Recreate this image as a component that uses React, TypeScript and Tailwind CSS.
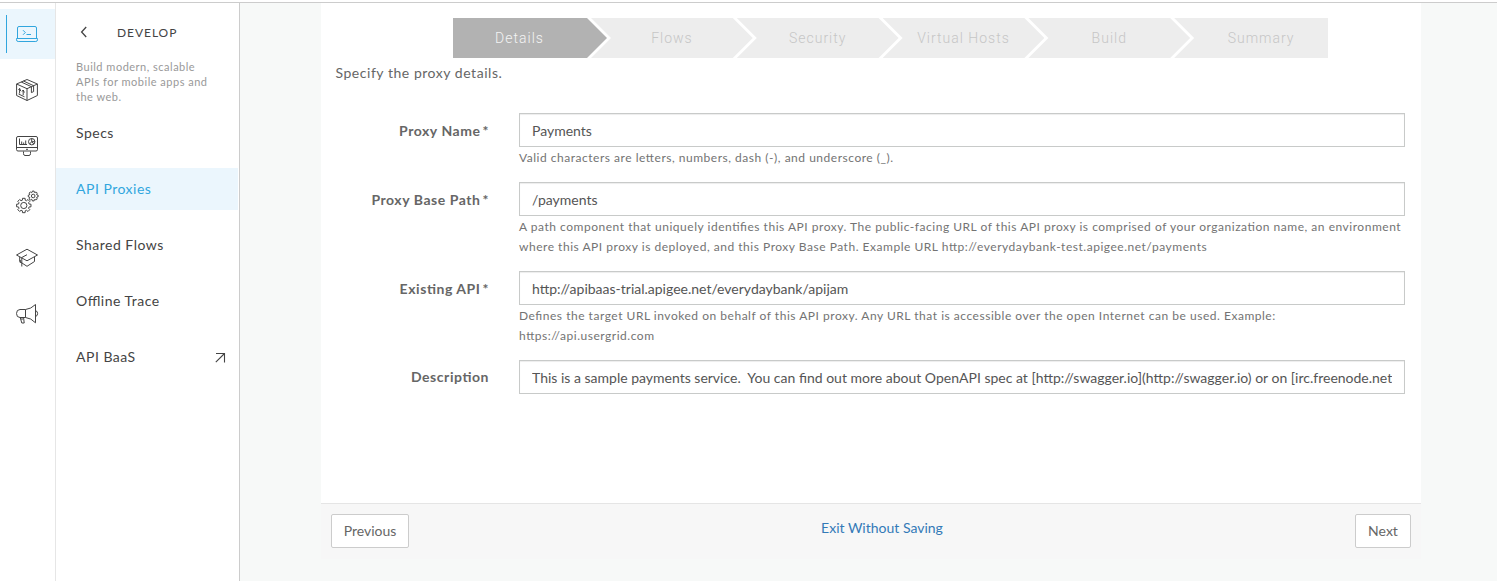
import type { ReactNode } from 'react';

const middle =
  '-ml-4 w-[161.8px] bg-[#ededed] text-[#c6c6c6] [clip-path:polygon(0_0,calc(100%-20px)_0,100%_50%,calc(100%-20px)_100%,0_100%,20px_50%)]';

const steps = [
  {
    label: 'Details',
    style:
      'w-[154px] bg-[#b2b2b2] pr-[21px] text-[#f4f4f4] [clip-path:polygon(0_0,calc(100%-20px)_0,100%_50%,calc(100%-20px)_100%,0_100%)]',
  },
  { label: 'Flows', style: middle },
  { label: 'Security', style: middle },
  { label: 'Virtual Hosts', style: middle },
  { label: 'Build', style: middle },
  {
    label: 'Summary',
    style: '-ml-4 w-[153.8px] bg-[#ededed] pl-5 text-[#c6c6c6] [clip-path:polygon(0_0,100%_0,100%_100%,0_100%,20px_50%)]',
  },
];

const gear = (cx: number, cy: number, outer: number, inner: number) => {
  const points: string[] = [];
  for (let i = 0; i < 8; i++) {
    [[-0.2, inner], [-0.14, outer], [0.14, outer], [0.2, inner]].forEach(([offset, r]) => {
      const a = (i * Math.PI) / 4 + offset * 1.3;
      points.push(`${(cx + r * Math.sin(a)).toFixed(2)},${(cy - r * Math.cos(a)).toFixed(2)}`);
    });
  }
  return points.join(' ');
};

function Glyph({ children }: { children: ReactNode }) {
  return (
    <svg width="24" height="24" viewBox="0 0 24 24" fill="none" stroke="currentColor" strokeWidth="1" strokeLinejoin="round">
      {children}
    </svg>
  );
}

const rail = [
  <Glyph>
    <path d="M2.5 16.2V6Q2.5 4.5 4 4.5H20Q21.5 4.5 21.5 6V16.2M1.5 16.5H22.5V17.8Q22.5 19.5 20.8 19.5H3.2Q1.5 19.5 1.5 17.8Z" />
    <path d="M8 8.2L10.3 10.5L8 12.8M11.5 12.5H16" />
  </Glyph>,
  <Glyph>
    <path d="M12 1.5L22.4 6V17.5L12 22.5L1.6 17.5V6ZM1.6 6L12 10.7L22.4 6M12 10.7V22.5M6.2 4L16.4 8.7V14.6L18.6 13.6V7.7L8.5 3" />
    <path d="M4.6 15.5V10.5M3.5 12L4.6 10.4L5.7 13M8.2 17V12M7 13.5L8.2 12L9.4 14.5M3.6 16L9.5 18.8" />
  </Glyph>,
  <Glyph>
    <rect x="1.5" y="2.5" width="21" height="14.5" rx="1.5" />
    <path d="M1.5 13.5H22.5M11 15.3H13M8.5 17.5V19.5Q8.5 21.5 10 21.5H14Q15.5 21.5 15.5 19.5V17.5M4.5 4.5V10.5H12M6.7 10.5V7.5M8.7 10.5V8.5M10.7 10.5V6.5" />
    <circle cx="16.7" cy="7.7" r="3.2" />
    <path d="M16.7 4.4V7.7H19.9M16.7 7.7L14.6 10M16.7 7.7L18.8 10" />
  </Glyph>,
  <Glyph>
    <polygon points={gear(8.8, 15.5, 7.3, 5.5)} />
    <circle cx="8.8" cy="15.5" r="3.1" />
    <polygon points={gear(18.2, 6, 5, 3.9)} />
    <circle cx="18.2" cy="6" r="1.8" />
  </Glyph>,
  <Glyph>
    <path d="M12 3.2L22.5 9L12 14.8L1.5 9ZM4.7 11V15.5L12 20.3L19.5 15.5V11M12 8.7L6.8 11.5V20.5M5.3 14V17" />
  </Glyph>,
  <Glyph>
    <path d="M10.5 7.5H5Q1.5 7.5 1.5 11.5Q1.5 15.5 5 15.5H10.5ZM10.5 7.5Q16 7 20.5 2.5V20.8Q16 16 10.5 15.5M20.5 8.7Q22.6 9 22.6 11.5Q22.6 14 20.5 14.5M5.2 15.5L6.8 21H9.2L8.6 15.7M7 16V18" />
  </Glyph>,
];

const nav = ['Specs', 'API Proxies', 'Shared Flows', 'Offline Trace', 'API BaaS'];

type FieldProps = { label: string; value: string; required?: boolean; help?: string[]; height: string };

function Field({ label, value, required, help, height }: FieldProps) {
  return (
    <div className={`flex ${height}`}>
      <label
        className={`${required ? 'pt-2' : 'pt-[7px]'} w-[168px] shrink-0 text-right text-[14px] leading-5 font-bold tracking-[0.55px] text-[#666]`}
      >
        {label}
        {required && <span className="ml-0.5">*</span>}
      </label>
      <div className="ml-[30px] w-[886px]">
        <div className="h-[34px] border border-[#c8cac9] bg-white px-3 pt-[7px] text-[14px] leading-5 text-[#555] shadow-[inset_0_1px_1px_rgba(0,0,0,0.075)]">
          <div className="overflow-hidden whitespace-pre">{value}</div>
        </div>
        {help?.map((line) => (
          <p key={line} className="text-[12px] leading-5 whitespace-nowrap tracking-[0.52px] text-[#737373] first-of-type:pt-px">
            {line}
          </p>
        ))}
      </div>
    </div>
  );
}

export default function App() {
  return (
    <div className="flex h-[581px] w-[1497px] flex-col overflow-hidden bg-white pt-0.5 font-['Lato',sans-serif] [font-feature-settings:'liga'_1]">
      <div className="flex min-h-0 flex-1 border-t border-[#ccc]">
        <nav className="w-14 shrink-0 border-r border-[#e6e6e6] pt-1.5 text-[#444]">
          {rail.map((icon, i) => (
            <div
              key={i}
              className={
                i === 0
                  ? 'mb-1.5 flex h-[50px] items-center bg-[#ebf6fd] pl-1.5 text-[#31a6de]'
                  : 'mb-1.5 flex h-[50px] items-center pl-1.5'
              }
            >
              <span className={i === 0 ? 'h-[38px] w-px bg-[#31a6de]' : 'h-[38px] w-px'} />
              <span className="ml-2">{icon}</span>
            </div>
          ))}
        </nav>

        <aside className="w-[184px] shrink-0 border-r border-[#ccc] pr-px">
          <div className="flex h-14 items-center pl-6 text-[#444]">
            <svg width="8" height="12" viewBox="0 0 8 12" fill="none" stroke="currentColor" strokeWidth="1.3" className="mt-0.5">
              <path d="M6.2 1L1.6 6L6.2 11" />
            </svg>
            <h2 className="mt-[3px] ml-[29px] text-[12px] tracking-[0.95px]">DEVELOP</h2>
          </div>
          <p className="pl-5 text-[11px] leading-[15px] tracking-[0.5px] text-[#999]">
            Build modern, scalable
            <br />
            APIs for mobile apps and
            <br />
            the web.
          </p>
          <ul className="mt-2">
            {nav.map((item) => (
              <li
                key={item}
                className={
                  item === 'API Proxies'
                    ? 'mb-3.5 flex h-[42px] items-center justify-between bg-[#ebf6fd] pr-3 pl-5 text-[14px] tracking-[0.5px] text-[#31a6de]'
                    : 'mb-3.5 flex h-[42px] items-center justify-between pr-3 pl-5 text-[14px] tracking-[0.5px] text-[#444]'
                }
              >
                <span className="pb-0.5">{item}</span>
                {item === 'API BaaS' && (
                  <svg width="11" height="11" viewBox="0 0 11 11" fill="none" stroke="currentColor" strokeWidth="1.1">
                    <path d="M1 1.5H9.5V10.5M9.5 1.5L0.8 10.2" />
                  </svg>
                )}
              </li>
            ))}
          </ul>
        </aside>

        <main className="flex-1 bg-[#f7f9f8] pl-[81px]">
          <div className="w-[1100px]">
            <section className="h-[500px] bg-white pt-[15px]">
              <ol className="ml-[132px] flex h-10 w-[875px] font-['Roboto','Liberation_Sans',sans-serif] text-[14px] font-light tracking-[1px]">
                {steps.map((step) => (
                  <li key={step.label} className={`flex shrink-0 items-center justify-center ${step.style}`}>
                    {step.label}
                  </li>
                ))}
              </ol>
              <p className="mt-[5px] mb-[30px] ml-[14.5px] text-[14px] leading-5 tracking-[0.54px] text-[#666]">Specify the proxy details.</p>
              <Field label="Proxy Name" value="Payments" required height="h-[69px]" help={['Valid characters are letters, numbers, dash (-), and underscore (_).']} />
              <Field
                label="Proxy Base Path"
                value="/payments"
                required
                height="h-[89px]"
                help={[
                  'A path component that uniquely identifies this API proxy. The public-facing URL of this API proxy is comprised of your organization name, an environment',
                  'where this API proxy is deployed, and this Proxy Base Path. Example URL http://everydaybank-test.apigee.net/payments',
                ]}
              />
              <Field
                label="Existing API"
                value="http://apibaas-trial.apigee.net/everydaybank/apijam"
                required
                height="h-[89px]"
                help={[
                  'Defines the target URL invoked on behalf of this API proxy. Any URL that is accessible over the open Internet can be used. Example:',
                  'https://api.usergrid.com',
                ]}
              />
              <Field
                label="Description"
                value="This is a sample payments service.  You can find out more about OpenAPI spec at [http://swagger.io](http://swagger.io) or on [irc.freenode.net"
                height="h-[34px]"
              />
            </section>
            <footer className="flex h-14 items-start justify-between border-t border-[#e5e5e5] bg-[#f7f7f7] px-2.5 pt-2.5 text-[14px]">
              <button className="h-[34px] w-[78px] rounded-[2px] border border-[#ccc] bg-white pb-0.5 text-[#666]">Previous</button>
              <a className="pt-1 leading-5 text-[#337ab7]">Exit Without Saving</a>
              <button className="h-[34px] w-14 rounded-[2px] border border-[#ccc] bg-white pb-0.5 text-[#666]">Next</button>
            </footer>
          </div>
        </main>
      </div>
    </div>
  );
}
